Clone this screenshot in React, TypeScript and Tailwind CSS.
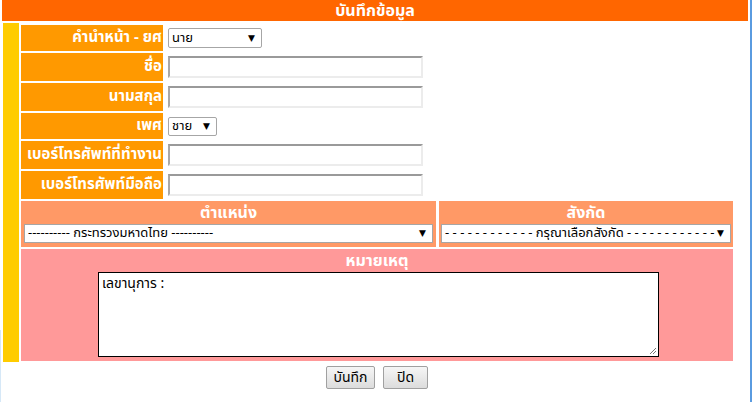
const FONT = "font-['Tahoma','Noto_Sans_Thai','Noto_Sans','DejaVu_Sans',sans-serif]"

const FIELDS = [
  { label: 'คำนำหน้า - ยศ', kind: 'select', value: 'นาย', w: 'w-[94px]', h: 'h-[26px]' },
  { label: 'ชื่อ', kind: 'input', h: 'h-[28px]' },
  { label: 'นามสกุล', kind: 'input', h: 'h-[28px]' },
  { label: 'เพศ', kind: 'select', value: 'ชาย', w: 'w-[49px]', h: 'h-[26px]' },
  { label: 'เบอร์โทรศัพท์ที่ทำงาน', kind: 'input', h: 'h-[28px]' },
  { label: 'เบอร์โทรศัพท์มือถือ', kind: 'input', h: 'h-[28px]' },
]

function FakeSelect({ value, className = '' }: { value: string; className?: string }) {
  return (
    <div
      className={`flex items-center justify-between bg-white border border-[#a6a6a6] rounded-[2px] pl-[3px] pr-[6px] text-[13px] text-black leading-none ${className}`}
    >
      <span className="whitespace-pre">{value}</span>
      <span className="text-[9px]">▼</span>
    </div>
  )
}

function TextBox() {
  return (
    <div className="w-[255px] h-[22px] bg-white border-2 border-t-[#9a9a9a] border-l-[#a8a8a8] border-b-[#ececec] border-r-[#ececec]" />
  )
}

export default function App() {
  return (
    <div className={`relative w-[754px] h-[402px] bg-white overflow-hidden ${FONT}`}>
      <div className="absolute left-0 top-[330px] bottom-0 w-[1px] bg-[#d6e8f7]" />
      <div className="absolute right-[2px] top-0 bottom-0 w-[2px] bg-[#5a9be0]" />

      <div className="ml-[2px] w-[746px] h-[21px] bg-[#ff6600] text-white font-bold text-[16px] flex items-center justify-center">
        บันทึกข้อมูล
      </div>

      <div className="flex mt-[2px]">
        <div className="ml-[3px] w-[16px] bg-[#ffcc00]" />
        <div className="ml-[2px] w-[712px] pt-[2px] flex flex-col gap-[2px] pb-[1px]">
          {FIELDS.map(f => (
            <div key={f.label} className={`flex ${f.h}`}>
              <div className="w-[142px] bg-[#ff9900] text-white font-bold text-[15px] flex items-center justify-end pr-[1px] whitespace-nowrap">
                {f.label}
              </div>
              <div className="flex items-center pl-[5px]">
                {f.kind === 'select' ? <FakeSelect value={f.value!} className={`${f.w} ${f.label === 'เพศ' ? 'h-[19px]' : 'h-[20px]'}`} /> : <TextBox />}
              </div>
            </div>
          ))}

          <div className="flex gap-[3px] h-[46px]">
            <div className="w-[415px] bg-[#ff9966] flex flex-col items-center px-[3px] pt-[1px]">
              <div className="text-white font-bold text-[16px] h-[22px] flex items-center">ตำแหน่ง</div>
              <FakeSelect value="---------- กระทรวงมหาดไทย ----------" className="w-[409px] h-[19px] border-[#7a7a7a] rounded-none" />
            </div>
            <div className="w-[294px] bg-[#ff9966] flex flex-col items-center px-[2px] pt-[1px]">
              <div className="text-white font-bold text-[16px] h-[22px] flex items-center">สังกัด</div>
              <FakeSelect
                value="- - - - - - - - - - - - กรุณาเลือกสังกัด - - - - - - - - - - - -"
                className="w-[290px] h-[19px] border-[#7a7a7a] rounded-none"
              />
            </div>
          </div>

          <div className="h-[112px] bg-[#ff9999] flex flex-col items-center">
            <div className="text-white font-bold text-[16px] h-[23px] flex items-center">หมายเหตุ</div>
            <div className="relative ml-[3px] w-[561px] h-[85px] bg-white border border-black px-[3px] pt-[3px] text-[14px] text-black leading-[16px]">
              เลขานุการ :
              <svg className="absolute right-[1px] bottom-[1px]" width="8" height="8" viewBox="0 0 8 8">
                <path d="M7 1 L1 7 M7 4 L4 7" stroke="#777" strokeWidth="1" />
              </svg>
            </div>
          </div>
        </div>
      </div>

      <div className="flex justify-center gap-[8px] mt-[4px]">
        <button className="w-[49px] h-[23px] text-[14px] text-black border border-[#a0a0a0] rounded-[2px] bg-gradient-to-b from-[#f6f6f6] to-[#dcdcdc]">
          บันทึก
        </button>
        <button className="w-[45px] h-[23px] text-[14px] text-black border border-[#a0a0a0] rounded-[2px] bg-gradient-to-b from-[#f6f6f6] to-[#dcdcdc]">
          ปิด
        </button>
      </div>
    </div>
  )
}
